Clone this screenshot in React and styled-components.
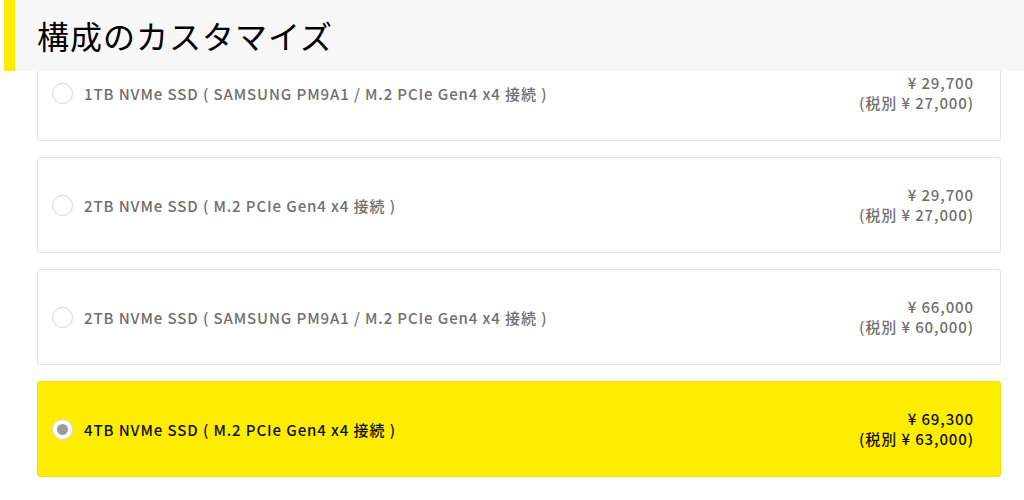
import React from "react";
import styled, { createGlobalStyle } from "styled-components";

const Global = createGlobalStyle`
  html, body { margin: 0; padding: 0; background: #fff; }
  body { font-family: "Noto Sans CJK JP", "Noto Sans", sans-serif; }
`;

const Page = styled.div`
  position: relative;
  width: 1024px;
  height: 500px;
  overflow: hidden;
  background: #fff;
`;

const Header = styled.div`
  position: absolute;
  top: 0;
  left: 4px;
  right: 0;
  height: 71px;
  background: #f7f7f7;
  border-left: 11px solid #ffed00;
  display: flex;
  align-items: center;
  padding-left: 22px;
  z-index: 2;
`;

const Title = styled.h2`
  margin: 0;
  font-size: 32px;
  font-weight: 400;
  letter-spacing: 1px;
  color: #000;
  line-height: 1;
  transform: translateY(-1px);
`;

const List = styled.div`
  display: flex;
  flex-direction: column;
  gap: 16px;
  padding: 45px 23px 0 37px;
`;

const Card = styled.label`
  display: flex;
  align-items: center;
  height: 96px;
  box-sizing: border-box;
  border: 1px solid ${(p) => (p.$selected ? "#f0e400" : "#e2e2e2")};
  border-radius: 3px;
  background: ${(p) => (p.$selected ? "#ffed00" : "#fff")};
  padding: 0 26px 0 14px;
  color: ${(p) => (p.$selected ? "#111" : "#707070")};
`;

const Radio = styled.span`
  width: 21px;
  height: 21px;
  box-sizing: border-box;
  border-radius: 50%;
  border: 1px solid #d6d6d6;
  background: #fff;
  display: flex;
  align-items: center;
  justify-content: center;
  flex: none;
  &::after {
    content: "";
    display: ${(p) => (p.$checked ? "block" : "none")};
    width: 11px;
    height: 11px;
    border-radius: 50%;
    background: #9c9c9c;
  }
`;

const Name = styled.span`
  margin-left: 11px;
  font-size: 15px;
  font-weight: 500;
  letter-spacing: 0.9px;
  flex: 1;
`;

const Price = styled.div`
  text-align: right;
  font-size: 15px;
  font-weight: 500;
  line-height: 20px;
  letter-spacing: 0.9px;
`;

const items = [
  { name: "1TB NVMe SSD ( SAMSUNG PM9A1 / M.2 PCIe Gen4 x4 接続 )", price: "29,700", ex: "27,000" },
  { name: "2TB NVMe SSD ( M.2 PCIe Gen4 x4 接続 )", price: "29,700", ex: "27,000" },
  { name: "2TB NVMe SSD ( SAMSUNG PM9A1 / M.2 PCIe Gen4 x4 接続 )", price: "66,000", ex: "60,000" },
  { name: "4TB NVMe SSD ( M.2 PCIe Gen4 x4 接続 )", price: "69,300", ex: "63,000", selected: true },
];

export default function App() {
  return (
    <Page>
      <Global />
      <Header>
        <Title>構成のカスタマイズ</Title>
      </Header>
      <List>
        {items.map((it) => (
          <Card key={it.name} $selected={it.selected}>
            <Radio $checked={it.selected} />
            <Name>{it.name}</Name>
            <Price>
              <div>¥ {it.price}</div>
              <div>(税別 ¥ {it.ex})</div>
            </Price>
          </Card>
        ))}
      </List>
    </Page>
  );
}
